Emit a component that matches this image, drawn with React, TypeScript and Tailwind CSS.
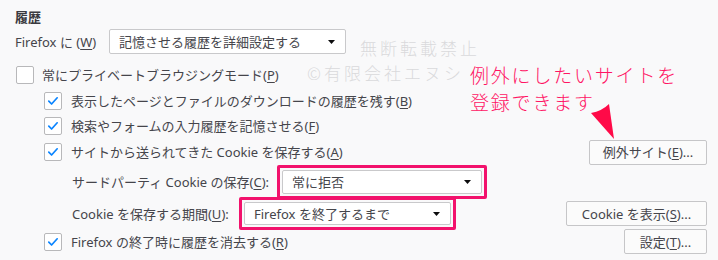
import React from "react";

function Check({ checked }: { checked: boolean }) {
  return (
    <div className="w-[18px] h-[18px] shrink-0 rounded-[2px] border border-[#b8b8ba] bg-white flex items-center justify-center">
      {checked && (
        <svg width="12" height="10" viewBox="0 0 12 10">
          <path d="M1.8 5.2 L4.6 8 L10.2 1.8" fill="none" stroke="#0a84ff" strokeWidth="1.7" strokeLinecap="round" strokeLinejoin="round" />
        </svg>
      )}
    </div>
  );
}

function Arrow() {
  return (
    <svg width="7" height="4" viewBox="0 0 7 4">
      <path d="M0 0 L7 0 L3.5 4 Z" fill="#0c0c0d" />
    </svg>
  );
}

function Select({ text, w, h = "h-[25px]" }: { text: string; w: string; h?: string }) {
  return (
    <div className={`${w} ${h} flex items-center justify-between rounded-[2px] border border-[#c9c9cb] bg-white pl-[9px] pr-[10px]`}>
      <span>{text}</span>
      <Arrow />
    </div>
  );
}

function Btn({ children, w }: { children: React.ReactNode; w: string }) {
  return (
    <div className={`${w} h-[25px] flex items-center justify-center rounded-[2px] border border-[#c6c6c8] bg-[#fbfbfb]`}>
      {children}
    </div>
  );
}

function U({ c }: { c: string }) {
  return <span className="underline underline-offset-2">{c}</span>;
}

export default function App() {
  return (
    <div className="relative w-[718px] h-[260px] overflow-hidden bg-[#f9f9fa] text-[13px] leading-[18px] text-[#45454b] font-['Noto_Sans','Noto_Sans_CJK_JP',sans-serif]">
      <div className="pl-[15px] pr-[11px] pt-[8px]">
        <div className="h-[18px] font-bold text-[#3a3a40]">履歴</div>
        <div className="mt-[3px] flex h-[25px] items-center">
          <span className="w-[94px]">
            Firefox に (<U c="W" />)
          </span>
          <Select text="記憶させる履歴を詳細設定する" w="w-[237px]" />
        </div>

        <div className="mt-[8px] flex h-[26px] items-center gap-[8px] pl-[1px]">
          <Check checked={false} />
          <span>
            常にプライベートブラウジングモード(<U c="P" />)
          </span>
        </div>
        <div className="flex h-[25px] items-center gap-[9px] pl-[29px]">
          <Check checked />
          <span>
            表示したページとファイルのダウンロードの履歴を残す(<U c="B" />)
          </span>
        </div>
        <div className="flex h-[26px] items-center gap-[9px] pl-[29px]">
          <Check checked />
          <span>
            検索やフォームの入力履歴を記憶させる(<U c="F" />)
          </span>
        </div>
        <div className="flex h-[26px] items-center justify-between pl-[29px]">
          <div className="flex items-center gap-[9px]">
            <Check checked />
            <span>
              サイトから送られてきた Cookie を保存する(<U c="A" />)
            </span>
          </div>
          <Btn w="w-[118px]">
            例外サイト(<U c="E" />)...
          </Btn>
        </div>
        <div className="flex h-[33px] items-center pl-[57px]">
          <span className="w-[205px]">
            サードパーティ Cookie の保存(<U c="C" />):
          </span>
          <div className="rounded-[2px] border-[3px] border-[#f2126c] p-[2px]">
            <Select text="常に拒否" w="w-[200px]" h="h-[24px]" />
          </div>
        </div>
        <div className="flex h-[31px] items-center justify-between pl-[57px]">
          <div className="flex items-center">
            <span className="w-[167px]">
              Cookie を保存する期間(<U c="U" />):
            </span>
            <div className="rounded-[2px] border-[3px] border-[#f2126c] p-[2px]">
              <Select text="Firefox を終了するまで" w="w-[207px]" h="h-[23px]" />
            </div>
          </div>
          <Btn w="w-[141px]">
            Cookie を表示(<U c="S" />)...
          </Btn>
        </div>
        <div className="flex h-[25px] items-center justify-between pl-[29px]">
          <div className="flex items-center gap-[9px]">
            <Check checked />
            <span>
              Firefox の終了時に履歴を消去する(<U c="R" />)
            </span>
          </div>
          <Btn w="w-[83px]">
            設定(<U c="T" />)...
          </Btn>
        </div>
      </div>

      <div className="absolute left-[360px] top-[37px] text-[17px] leading-[22px] tracking-[3px] font-light text-[#dadadc] font-['Noto_Sans_CJK_JP',sans-serif]">
        無断転載禁止
      </div>
      <div className="absolute left-[307px] top-[61px] text-[17px] leading-[24px] tracking-[3px] font-light text-[#dadadc] font-['Noto_Sans_CJK_JP',sans-serif]">
        ©有限会社エヌシ
      </div>

      <div className="absolute left-[470px] top-[61px] text-[19px] leading-[27px] tracking-[1.8px] font-light text-[#ff1464] font-['Noto_Sans_CJK_JP',sans-serif]">
        <div>例外にしたいサイトを</div>
        <div>登録できます</div>
      </div>

      <svg className="absolute left-0 top-0" width="718" height="260" viewBox="0 0 718 260">
        <path d="M591 113 Q602 111 609 104 L614 139 Z" fill="#ff0a48" />
      </svg>
    </div>
  );
}
